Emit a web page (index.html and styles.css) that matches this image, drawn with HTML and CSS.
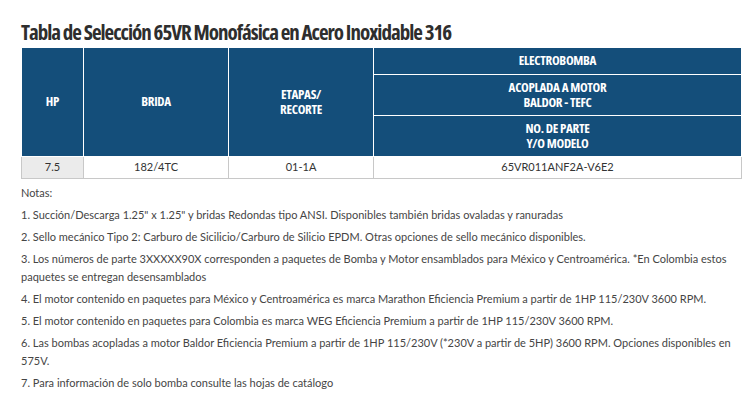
FILE: index.html
```html
<!DOCTYPE html>
<html lang="es">
<head>
<meta charset="utf-8">
<title>Tabla de Selección 65VR</title>
<link rel="stylesheet" href="styles.css">
</head>
<body>
<main class="page">
  <h1 class="title">Tabla de Selección 65VR Monofásica en Acero Inoxidable 316</h1>
  <table class="sel">
    <colgroup>
      <col class="c-hp"><col class="c-brida"><col class="c-etapas"><col class="c-modelo">
    </colgroup>
    <thead>
      <tr class="r1">
        <th rowspan="3">HP</th>
        <th rowspan="3">BRIDA</th>
        <th rowspan="3">ETAPAS/<br>RECORTE</th>
        <th>ELECTROBOMBA</th>
      </tr>
      <tr class="r2"><th>ACOPLADA A MOTOR<br>BALDOR - TEFC</th></tr>
      <tr class="r3"><th>NO. DE PARTE<br>Y/O MODELO</th></tr>
    </thead>
    <tbody>
      <tr>
        <td class="hp">7.5</td>
        <td>182/4TC</td>
        <td>01-1A</td>
        <td>65VR011ANF2A-V6E2</td>
      </tr>
    </tbody>
  </table>
  <section class="notes">
    <p>Notas:</p>
    <p>1. Succión/Descarga 1.25" x 1.25" y bridas Redondas tipo ANSI. Disponibles también bridas ovaladas y ranuradas</p>
    <p>2. Sello mecánico Tipo 2: Carburo de Sicilicio/Carburo de Silicio EPDM. Otras opciones de sello mecánico disponibles.</p>
    <p>3. Los números de parte 3XXXXX90X corresponden a paquetes de Bomba y Motor ensamblados para México y Centroamérica. *En Colombia estos paquetes se entregan desensamblados</p>
    <p>4. El motor contenido en paquetes para México y Centroamérica es marca Marathon Eficiencia Premium a partir de 1HP 115/230V 3600 RPM.</p>
    <p>5. El motor contenido en paquetes para Colombia es marca WEG Eficiencia Premium a partir de 1HP 115/230V 3600 RPM.</p>
    <p>6. Las bombas acopladas a motor Baldor Eficiencia Premium a partir de 1HP 115/230V (*230V a partir de 5HP) 3600 RPM. Opciones disponibles en 575V.</p>
    <p>7. Para información de solo bomba consulte las hojas de catálogo</p>
  </section>
</main>
</body>
</html>
```
FILE: styles.css
```css
html, body {
  margin: 0;
  padding: 0;
  background: #ffffff;
}
.page {
  padding: 20px 11px 0 21px;
  font-family: "Open Sans", "Noto Sans", sans-serif;
}
.title {
  margin: 0 0 4px;
  font-size: 21px;
  line-height: 24px;
  font-weight: 700;
  font-stretch: 75%;
  letter-spacing: -1px;
  color: #2e2e2e;
}
.sel {
  width: 720px;
  border-collapse: collapse;
  table-layout: fixed;
}
.c-hp { width: 62px; }
.c-brida { width: 145px; }
.c-etapas { width: 145px; }
.c-modelo { width: 368px; }
.sel th {
  background: #144e7a;
  color: #ffffff;
  border: 1px solid #ffffff;
  font-size: 13px;
  line-height: 15px;
  font-weight: 700;
  font-stretch: 75%;
  letter-spacing: -0.3px;
  padding: 0;
  text-align: center;
  vertical-align: middle;
}
.sel .r1 th { border-top: 0; }
.r1 { height: 26px; }
.r2 { height: 41px; }
.r3 { height: 41px; }
.sel td {
  border: 1px solid #c8c8c8;
  height: 21px;
  padding: 0;
  text-align: center;
  font-family: "Lato", "Open Sans", sans-serif;
  font-size: 11px;
  line-height: 14px;
  color: #333333;
}
.sel td.hp { background: #ebebeb; }
.notes {
  margin-top: 5px;
  max-width: 715px;
  color: #454545;
  font-family: "Lato", "Open Sans", sans-serif;
  font-size: 11px;
  line-height: 18px;
}
.notes p {
  margin: 0 0 4px;
}
```
